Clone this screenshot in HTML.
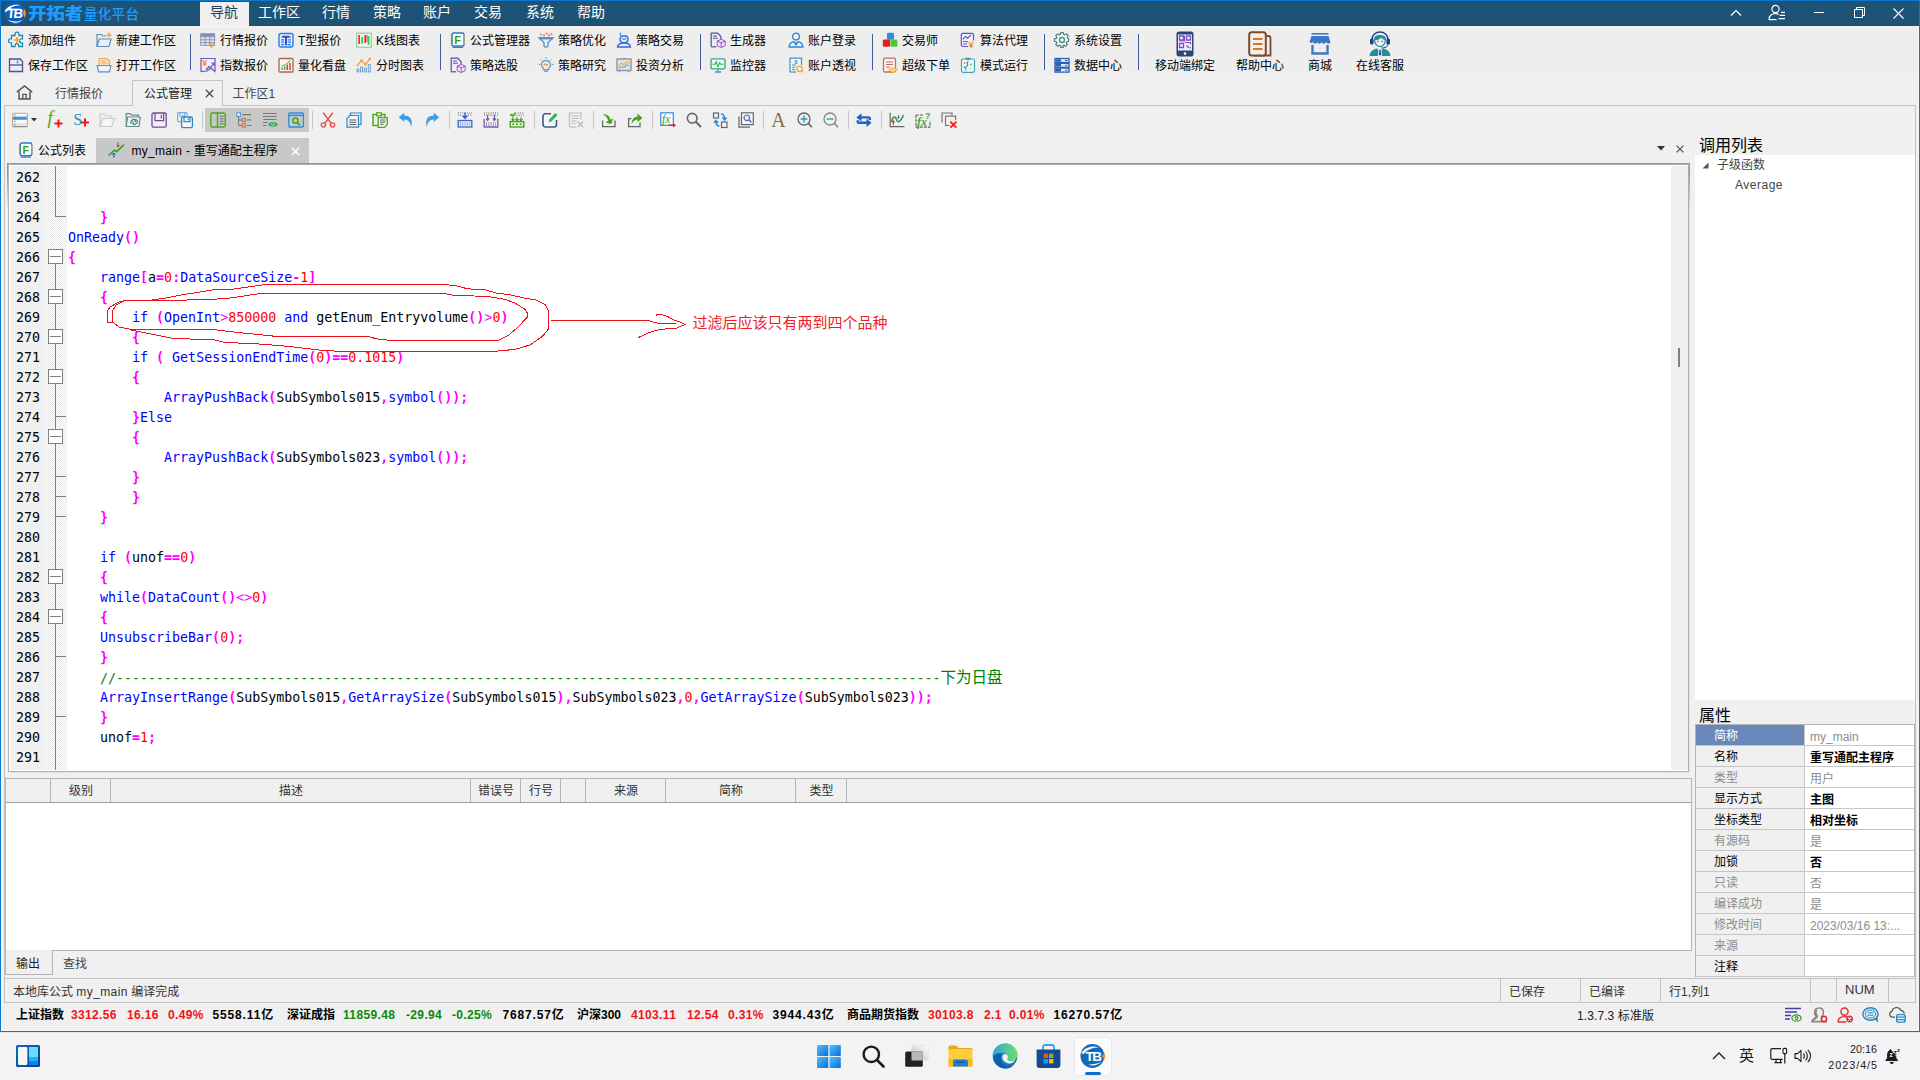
<!DOCTYPE html>
<html lang="zh-CN"><head><meta charset="utf-8"><title>开拓者量化平台</title>
<style>
*{box-sizing:border-box;margin:0;padding:0}
html,body{width:1920px;height:1080px;overflow:hidden;background:#f0f0f0}
body{font-family:"Liberation Sans","Noto Sans CJK SC",sans-serif;font-size:12px;color:#000}
#app{position:absolute;left:0;top:0;width:1920px;height:1080px;overflow:hidden;background:#f0f0f0}
.abs{position:absolute}
.t{position:absolute;white-space:nowrap;line-height:1}
svg{position:absolute;overflow:visible}
/* title bar */
#title{position:absolute;left:0;top:0;width:1920px;height:26px;background:#1f5376;border-top:1px solid #0b78d0;border-bottom:1px solid #184c71}
#lborder{position:absolute;left:0;top:0;width:1px;height:1032px;background:#0b78d0}
#rborder{position:absolute;left:1919px;top:0;width:1px;height:1032px;background:#0b78d0}
#bborder{position:absolute;left:0;top:1031px;width:1920px;height:1px;background:#0b78d0}
.menu{position:absolute;top:4px;font-size:14px;color:#fff;line-height:16px;white-space:nowrap}
#mactive{position:absolute;left:200px;top:2px;width:49px;height:24px;background:#f0f0f0}
/* ribbon */
#ribbon{position:absolute;left:1px;top:26px;width:1918px;height:50px;background:#eeeeee;border-top:1px solid #f8f5f3}
.rl{position:absolute;font-size:12px;line-height:14px;white-space:nowrap;color:#000}
.rsep{position:absolute;top:34px;width:1px;height:36px;background:#3b5d95}
/* workspace tabs */
.wtab{position:absolute;font-size:12px;line-height:14px;white-space:nowrap;color:#444;top:86.6px}
.tbsep{position:absolute;top:111px;width:1px;height:18px;background:#c6c6c6}
/* editor */
#ed{position:absolute;left:8px;top:164px;width:1681px;height:608px;background:#fff;border:1px solid #aeb0b8}
#ednum{position:absolute;left:10px;top:166px;width:33px;height:604px;background:#f0f0f0}
#edfold{position:absolute;left:43px;top:166px;width:24px;height:604px;background:#fdfdfd;background-image:linear-gradient(45deg,#e9e9e9 25%,transparent 25%,transparent 75%,#e9e9e9 75%),linear-gradient(45deg,#e9e9e9 25%,transparent 25%,transparent 75%,#e9e9e9 75%);background-size:2px 2px;background-position:0 0,1px 1px}
#edsb{position:absolute;left:1671px;top:166px;width:17px;height:604px;background:#f0f0f0}
.ln,.cl{position:absolute;white-space:pre;font-family:"DejaVu Sans Mono","Liberation Mono",monospace;font-size:13.3px;line-height:20px;height:20px;letter-spacing:0}
.ln{left:16px;color:#000}
.cl{left:68px;color:#000}
.k{color:#0000ff}.p{color:#ff00ff;font-weight:bold}.q{color:#ff00ff}.n{color:#ff0000}.c{color:#008000}
.fb{position:absolute;left:48px;width:15px;height:15px;border:1px solid #808080;background:#fff}
.fb:after{content:"";position:absolute;left:1px;top:6px;width:11px;height:1px;background:#808080}
.ft{position:absolute;left:56px;width:10px;height:1px;background:#808080}
/* right panel */
.ph{position:absolute;font-size:16px;line-height:18px;color:#000;white-space:nowrap}
#tree{position:absolute;left:1695px;top:155px;width:220px;height:545px;background:#fff}
#pg{position:absolute;left:1695px;top:724px;width:220px;height:253px;background:#f0f0f0;border:1px solid #b4b4b4}
.pr{position:absolute;left:0;width:218px;height:21px;border-bottom:1px solid #c6c6c6}
.pr .l{position:absolute;left:18px;top:3.8px;font-size:12px;line-height:14px;white-space:nowrap}
.pr .v{position:absolute;left:108px;top:0;width:110px;height:20px;background:#fff;border-left:1px solid #c6c6c6}
.pr .v span{position:absolute;left:5px;top:4.5px;font-size:12px;line-height:14px;white-space:nowrap}
.pr.d .l,.pr.d .v span{color:#8d8d8d}
.pr.b .v span{font-weight:bold}
/* output */
#outp{position:absolute;left:5px;top:778px;width:1687px;height:173px;background:#fff;border:1px solid #b4b4b4}
#outh{position:absolute;left:6px;top:779px;width:1685px;height:24px;background:#f0f0f0;border-bottom:1px solid #a0a0a0}
.oh{position:absolute;top:779px;height:23px;border-right:1px solid #b4b4b4;font-size:12px;line-height:24px;text-align:center;color:#333;padding-left:2px}
/* status */
#stat{position:absolute;left:4px;top:978px;width:1912px;height:25px;border-top:1px solid #c3c3c3;border-bottom:1px solid #c3c3c3;border-left:1px solid #c3c3c3;background:#f0f0f0}
.sd{position:absolute;top:979px;width:1px;height:23px;background:#c3c3c3}
.st{position:absolute;top:984.6px;font-size:12px;line-height:14px;white-space:nowrap;color:#333}
.tk{position:absolute;top:1008px;font-size:12px;line-height:14px;white-space:nowrap;font-weight:bold;color:#000}
.r{color:#f01414}.g{color:#0a8a0a}
#task{position:absolute;left:0;top:1032px;width:1920px;height:48px;background:#f3f3f3}

#inl{position:absolute;left:1px;top:27px;width:1px;height:1004px;background:#faf6f2}
#inr{position:absolute;left:1918px;top:27px;width:1px;height:1004px;background:#faf6f2}
#inb{position:absolute;left:1px;top:1030px;width:1918px;height:1px;background:#faf6f2}
#tsh{position:absolute;left:0;top:1032px;width:1920px;height:1px;background:#e6e2e0}

</style></head>
<body>
<div id="app">
<div id="title"></div>
<div id="mactive"></div>
<!-- logo -->
<svg style="left:3px;top:2px" width="24" height="23" viewBox="0 0 24 23">
  <ellipse cx="11.9" cy="10.9" rx="10.9" ry="10.8" fill="#0b5fb9"/>
  <path d="M1.6 9.2 C4.5 4 11 1.6 17.5 3.2 C11 3.4 6.5 5.4 3.4 9.8Z" fill="#fff"/>
  <path d="M1.3 10.5 C2.6 8.6 5 6.4 8 5.6 L8.6 7.2 C6 7.6 3.6 9 1.3 10.5Z" fill="#fff"/>
  <path d="M20.6 6.6 C23.6 9.4 23.6 13.4 20.9 16.2 C21.6 14 20.6 12.2 19.4 11.2 C20.8 10 21.2 8.4 20.6 6.6Z" fill="#f5921e"/>
  <path d="M4.4 17.6 C8 21.6 15.5 22 20 17.4 C15.5 20.2 9 20 4.4 17.6Z" fill="#fff"/>
  <path d="M6.2 19.8 C10 22.6 15.4 22.4 19 19.4 C15 21.4 10 21.4 6.2 19.8Z" fill="#2f86d8"/>
  <text x="5.2" y="16.4" font-family="Liberation Sans,sans-serif" font-weight="bold" font-size="13.5" fill="#fff" letter-spacing="-1.6" transform="skewX(-6)">TB</text>
</svg>
<div class="t" style="left:28.4px;top:4.9px;font-size:16px;line-height:18px;font-weight:900;color:#1d9dff;letter-spacing:0;transform:scaleX(1.15);transform-origin:left top;font-family:'Liberation Sans','Noto Sans CJK SC',sans-serif">开拓者</div>
<div class="t" style="left:84px;top:7px;font-size:13.5px;line-height:16px;font-weight:500;color:#1d9dff;letter-spacing:0.3px">量化平台</div>
<div class="menu" style="left:210px;color:#1f3a5f">导航</div>
<div class="menu" style="left:258px">工作区</div>
<div class="menu" style="left:322px">行情</div>
<div class="menu" style="left:373px">策略</div>
<div class="menu" style="left:423px">账户</div>
<div class="menu" style="left:474px">交易</div>
<div class="menu" style="left:526px">系统</div>
<div class="menu" style="left:577px">帮助</div>
<!-- window controls -->
<svg style="left:1730px;top:6.5px" width="12" height="12" viewBox="0 0 12 12"><path d="M1 8.5 L6 3.5 L11 8.5" fill="none" stroke="#fff" stroke-width="1.2"/></svg>
<svg style="left:1768px;top:4px" width="18" height="17" viewBox="0 0 18 17"><circle cx="7.5" cy="5" r="3.6" fill="none" stroke="#fff" stroke-width="1.2"/><path d="M1 16 C1 11.5 4 9.6 7.5 9.6 C9 9.6 10 10 10.6 10.4" fill="none" stroke="#fff" stroke-width="1.2"/><path d="M1 15.6 H8.5" stroke="#fff" stroke-width="1.2"/><path d="M13 8.4 H17 M11.5 11.4 H17 M10.5 14.6 H17" stroke="#fff" stroke-width="1.1"/></svg>
<div class="abs" style="left:1814px;top:12px;width:10px;height:1px;background:#fff"></div>
<svg style="left:1853.5px;top:6.5px" width="11" height="11" viewBox="0 0 11 11"><path d="M0.5 2.5 H8.5 V10.5 H0.5Z M2.5 2.5 V0.5 H10.5 V8.5 H8.5" fill="none" stroke="#fff" stroke-width="1"/></svg>
<svg style="left:1892.5px;top:7.5px" width="11" height="11" viewBox="0 0 11 11"><path d="M0.5 0.5 L10.5 10.5 M10.5 0.5 L0.5 10.5" fill="none" stroke="#fff" stroke-width="1.1"/></svg>

<div id="ribbon"></div>
<svg style="left:8px;top:32px" width="16" height="16" viewBox="0 0 16 16"><g transform="translate(1,0)"><path d="M6 2.2 a2 2 0 0 1 4 0 v1.3 h3.5 v3.3 h-1 a2 2 0 0 0 0 4 h1 v3.7 h-3.8 v-1 a1.8 1.8 0 0 0 -3.6 0 v1 H2.5 v-3.6 h-1 a2 2 0 0 1 0-4 h1 V3.5 H6Z" fill="none" stroke="#1c8bb8" stroke-width="1.3"/><path d="M8 5 v6 M5 8 h6" stroke="#ff9a1a" stroke-width="1.7"/></g></svg>
<div class="rl" style="left:28px;top:33.6px">添加组件</div>
<svg style="left:96px;top:32px" width="16" height="16" viewBox="0 0 16 16"><path d="M1 14.5 V2.5 h4.5 l1.2 1.5 H10" fill="none" stroke="#5b8fbf" stroke-width="1.2"/><path d="M1 14.5 L3.3 7 H15 L13 14.5 Z" fill="none" stroke="#5b8fbf" stroke-width="1.2"/><path d="M13 0.5 v5 M10.5 3 h5" stroke="#f4a24a" stroke-width="1.3"/></svg>
<div class="rl" style="left:116px;top:33.6px">新建工作区</div>
<svg style="left:200px;top:32px" width="16" height="16" viewBox="0 0 16 16"><rect x="0.8" y="1.8" width="13.8" height="11.5" fill="#e8ecf3" stroke="#8492b0" stroke-width="1"/><path d="M0.8 4.8 h13.8 M0.8 7.8 h13.8 M0.8 10.6 h13.8 M5.2 1.8 v11.5 M9.8 1.8 v11.5" stroke="#8492b0" stroke-width="1"/><rect x="0.8" y="1.8" width="13.8" height="2.6" fill="#7f8fb5"/><text x="9.6" y="15.5" font-size="8" font-weight="bold" fill="#f59a23" font-family="Liberation Sans,sans-serif">¥</text></svg>
<div class="rl" style="left:220px;top:33.6px">行情报价</div>
<svg style="left:278px;top:32px" width="16" height="16" viewBox="0 0 16 16"><rect x="1" y="1.5" width="14" height="13.5" rx="2" fill="#e4f0ff" stroke="#2c7be5" stroke-width="1.4"/><path d="M3 5 h10 M3 7.8 h3.3 M9.7 7.8 H13 M3 10.2 h3.3 M9.7 10.2 H13 M3 12.6 h3.3 M9.7 12.6 H13" stroke="#2c7be5" stroke-width="1.2"/><path d="M4.5 4.8 h7 M8 4.8 v8.4" stroke="#3f46c9" stroke-width="2"/></svg>
<div class="rl" style="left:298px;top:33.6px">T型报价</div>
<svg style="left:356px;top:32px" width="16" height="16" viewBox="0 0 16 16"><rect x="0.7" y="1.2" width="14.6" height="14" fill="#eef7ee" stroke="#7fc39a" stroke-width="1"/><path d="M3.2 3 v9 M9.2 3 v8" stroke="#f03030" stroke-width="1.7"/><path d="M6.2 5 v6.5 M12.6 4 v9" stroke="#35c94e" stroke-width="1.7"/><path d="M11 3 v7" stroke="#f03030" stroke-width="1"/></svg>
<div class="rl" style="left:376px;top:33.6px">K线图表</div>
<svg style="left:450px;top:32px" width="16" height="16" viewBox="0 0 16 16"><rect x="2" y="1" width="12" height="13" rx="1.5" fill="#fff" stroke="#2e7bc4" stroke-width="1.4"/><path d="M2.5 15.3 h10.5" stroke="#2e7bc4" stroke-width="1.3"/><path d="M0.8 3.5 h1.8 M0.8 6 h1.8 M0.8 8.5 h1.8 M0.8 11 h1.8" stroke="#777" stroke-width="1"/><path d="M14 3 v9" stroke="#f0a030" stroke-width="1"/><text x="4.3" y="12" font-size="11" font-weight="bold" fill="#18a81e" font-family="Liberation Sans,sans-serif">F</text></svg>
<div class="rl" style="left:470px;top:33.6px">公式管理器</div>
<svg style="left:538px;top:32px" width="16" height="16" viewBox="0 0 16 16"><path d="M1 6 H15 L10 10.5 V13.5 a2 1.6 0 0 1 -4 0 V10.5Z" fill="none" stroke="#4f8dc9" stroke-width="1.3"/><path d="M1.5 6.3 h13" stroke="#4f8dc9" stroke-width="2.2"/><circle cx="3" cy="2.5" r="1.1" fill="#f07a78"/><circle cx="6" cy="3.4" r="1.1" fill="#f07a78"/><circle cx="8.6" cy="1.6" r="1.1" fill="#f07a78"/><circle cx="11" cy="3.4" r="1.1" fill="#f07a78"/><circle cx="13.4" cy="2.2" r="1.1" fill="#f07a78"/></svg>
<div class="rl" style="left:558px;top:33.6px">策略优化</div>
<svg style="left:616px;top:32px" width="16" height="16" viewBox="0 0 16 16"><path d="M4.4 2 v2" stroke="#3c62d8" stroke-width="1"/><circle cx="4.4" cy="1.4" r="1" fill="#3cb3e8"/><rect x="4" y="4" width="8" height="6.6" rx="3" fill="#e7efff" stroke="#3c62d8" stroke-width="1.3"/><rect x="5.6" y="6" width="4.8" height="2" rx="1" fill="#45c3ee"/><path d="M1.5 15 C2 11.5 5 11 8 11 C11 11 14 11.5 14.5 15Z" fill="#e7efff" stroke="#3c62d8" stroke-width="1.3"/></svg>
<div class="rl" style="left:636px;top:33.6px">策略交易</div>
<svg style="left:710px;top:32px" width="16" height="16" viewBox="0 0 16 16"><path d="M1.2 14.8 V1.2 h6.5 l3.3 3.3 V7" fill="none" stroke="#4a4fae" stroke-width="1.2"/><path d="M1.2 14.8 h5" stroke="#4a4fae" stroke-width="1.2"/><path d="M3 4 h4 M3 6.2 h5" stroke="#4a4fae" stroke-width="1"/><path d="M11.2 7.3 l4 1.8 v4.6 l-4 1.8 l-4-1.8 V9.1z M7.2 9.1 l4 1.7 l4-1.7 M11.2 10.8 v4.7" fill="#f3e9fb" stroke="#9b55c9" stroke-width="1"/></svg>
<div class="rl" style="left:730px;top:33.6px">生成器</div>
<svg style="left:788px;top:32px" width="16" height="16" viewBox="0 0 16 16"><circle cx="8" cy="4.6" r="3.4" fill="none" stroke="#2f87d6" stroke-width="1.3"/><path d="M1 15 C1.4 11.5 4 10 5.6 9.6 L8 12.5 L10.4 9.6 C12 10 14.6 11.5 15 15Z" fill="#e6f1fc" stroke="#2f87d6" stroke-width="1.3"/><path d="M8 10 v3.4" stroke="#2f87d6" stroke-width="1.4"/></svg>
<div class="rl" style="left:808px;top:33.6px">账户登录</div>
<svg style="left:882px;top:32px" width="16" height="16" viewBox="0 0 16 16"><rect x="5" y="0.8" width="7" height="7" rx="1.2" fill="#2a8fe0"/><rect x="0.8" y="7.4" width="7.2" height="7.4" rx="1.2" fill="#dd2020"/><rect x="8.4" y="7.4" width="7" height="7.4" rx="1.2" fill="#55c540"/></svg>
<div class="rl" style="left:902px;top:33.6px">交易师</div>
<svg style="left:960px;top:32px" width="16" height="16" viewBox="0 0 16 16"><path d="M13.5 8.5 V2.8 a1.5 1.5 0 0 0 -1.5 -1.5 H2.8 a1.5 1.5 0 0 0 -1.5 1.5 V13 a1.5 1.5 0 0 0 1.5 1.5 H8" fill="#f1eefb" stroke="#5d55c0" stroke-width="1.2"/><path d="M3 7 l2.6-2.6 l2 1.8 L11 2.8" fill="none" stroke="#5d55c0" stroke-width="1.1"/><path d="M3 9.6 h5 M3 12 h4" stroke="#5d55c0" stroke-width="1"/><text x="8.6" y="16" font-size="9.5" font-weight="bold" fill="#f5861f" font-family="Liberation Sans,sans-serif">¥</text></svg>
<div class="rl" style="left:980px;top:33.6px">算法代理</div>
<svg style="left:1054px;top:32px" width="16" height="16" viewBox="0 0 16 16"><path d="M6.7 1 h2.6 l0.45 1.9 l1.25 0.55 l1.7-1 l1.85 1.85 l-1 1.7 l0.55 1.25 L15 7.7 v2.6 l-1.9 0.45 l-0.55 1.25 l1 1.7 l-1.85 1.85 l-1.7-1 l-1.25 0.55 L9.3 16.9 H6.7 l-0.45-1.8 l-1.25-0.55 l-1.7 1 L1.45 13.7 l1-1.7 L1.9 10.75 L0 10.3 V7.7 l1.9-0.45 l0.55-1.25 l-1-1.7 L3.3 2.45 l1.7 1 l1.25-0.55z" transform="translate(0.5,-0.4) scale(0.94)" fill="#f4f7f8" stroke="#5b7a88" stroke-width="1.3"/><circle cx="8" cy="8" r="2.5" fill="none" stroke="#39a86b" stroke-width="1.4"/></svg>
<div class="rl" style="left:1074px;top:33.6px">系统设置</div>
<svg style="left:8px;top:57px" width="16" height="16" viewBox="0 0 16 16"><path d="M1.5 2 H12 L14.5 4.5 V14.5 H1.5Z" fill="none" stroke="#4b4f9a" stroke-width="1.3"/><path d="M1.5 8 H14.5" stroke="#4b4f9a" stroke-width="1.3"/><path d="M9.5 3.5 v3" stroke="#29b39a" stroke-width="1.5"/></svg>
<div class="rl" style="left:28px;top:58.6px">保存工作区</div>
<svg style="left:96px;top:57px" width="16" height="16" viewBox="0 0 16 16"><path d="M3 8 V1.5 h8 l2.5 2.5 V8" fill="#fde3c3" stroke="#f2a254" stroke-width="1.1"/><path d="M5 4 h5 M5 6 h7" stroke="#f2a254" stroke-width="1"/><path d="M1.2 8.5 H14.8 L13.5 14.8 H2.5Z" fill="#eef3f8" stroke="#5b8fbf" stroke-width="1.2"/></svg>
<div class="rl" style="left:116px;top:58.6px">打开工作区</div>
<svg style="left:200px;top:57px" width="16" height="16" viewBox="0 0 16 16"><path d="M1 1.5 H15 V14.5 L11 11 L7 14 L1 14.5Z" fill="#f1eefb" stroke="#6a56c2" stroke-width="1.2"/><text x="2.2" y="9.2" font-size="9" font-weight="bold" fill="#f58a1f" font-family="Liberation Sans,sans-serif">¥</text><path d="M6 13 L9 9.5 L10.5 11 L14 6 M11.3 6 H14 V8.7" fill="none" stroke="#6a56c2" stroke-width="1.2"/></svg>
<div class="rl" style="left:220px;top:58.6px">指数报价</div>
<svg style="left:278px;top:57px" width="16" height="16" viewBox="0 0 16 16"><rect x="1" y="1.5" width="14" height="13.5" rx="1" fill="#fbf4f1" stroke="#b0614c" stroke-width="1.3"/><path d="M4 13 v-2.5 M6.6 13 v-4" stroke="#37b44a" stroke-width="1.5"/><path d="M9.3 13 v-5.5 M12 13 v-7" stroke="#e53a33" stroke-width="1.5"/><path d="M3.5 9 C6 8.5 9 7 12.3 3.6" fill="none" stroke="#37b44a" stroke-width="1"/></svg>
<div class="rl" style="left:298px;top:58.6px">量化看盘</div>
<svg style="left:356px;top:57px" width="16" height="16" viewBox="0 0 16 16"><path d="M1 15 v-3 h1.8 v3z M4.5 15 v-5 h2 v5z M8.3 15 v-4 h2 v4z M12.3 15 v-7.5 h2 v7.5z" fill="#e6eff8" stroke="#6fa0cf" stroke-width="1"/><path d="M1 9 L5.5 3.5 L9.5 7.5 L14 1.5" fill="none" stroke="#f5a338" stroke-width="1.3"/><circle cx="5.5" cy="3.5" r="1.2" fill="#f5a338"/><circle cx="9.5" cy="7.5" r="1.2" fill="#f5a338"/><circle cx="14" cy="1.7" r="1.2" fill="#f5a338"/></svg>
<div class="rl" style="left:376px;top:58.6px">分时图表</div>
<svg style="left:450px;top:57px" width="16" height="16" viewBox="0 0 16 16"><path d="M1.2 14.8 V1.2 h6.5 l3.3 3.3 V7" fill="none" stroke="#4a4fae" stroke-width="1.2"/><path d="M1.2 14.8 h5" stroke="#4a4fae" stroke-width="1.2"/><path d="M3 4 h4 M3 6.2 h5" stroke="#4a4fae" stroke-width="1"/><path d="M11.2 7.3 l4 1.8 v4.6 l-4 1.8 l-4-1.8 V9.1z M7.2 9.1 l4 1.7 l4-1.7 M11.2 10.8 v4.7" fill="#f3e9fb" stroke="#9b55c9" stroke-width="1"/></svg>
<div class="rl" style="left:470px;top:58.6px">策略选股</div>
<svg style="left:538px;top:57px" width="16" height="16" viewBox="0 0 16 16"><path d="M5.3 11 C3.5 9.6 3.2 7.8 3.6 6.6 C4.2 4.6 6 3.6 8 3.6 C10 3.6 11.8 4.6 12.4 6.6 C12.8 7.8 12.5 9.6 10.7 11 V12.6 H5.3Z" fill="none" stroke="#5a9cc0" stroke-width="1.1"/><path d="M6 14.2 h4" stroke="#5a9cc0" stroke-width="1.2"/><path d="M8 0.3 v1.6 M2.6 2.4 l1.1 1.1 M13.4 2.4 l-1.1 1.1 M0.6 7.4 h1.6 M13.8 7.4 h1.6" stroke="#5a9cc0" stroke-width="1"/><path d="M5.5 8 l1.8-1 l1.2 1.4 l2-1.6" fill="none" stroke="#f09a3a" stroke-width="1.1"/></svg>
<div class="rl" style="left:558px;top:58.6px">策略研究</div>
<svg style="left:616px;top:57px" width="16" height="16" viewBox="0 0 16 16"><rect x="1" y="2" width="14" height="11.5" fill="#dfe3ea" stroke="#8d94a6" stroke-width="1.4"/><path d="M3 15.3 l1-1.8 M13 15.3 l-1-1.8 M8 0.5 v1.5" stroke="#8d94a6" stroke-width="1.2"/><path d="M2.5 9 L5.5 6 L8 8 L11 4.5 L13.5 6.5" fill="none" stroke="#f3b12e" stroke-width="1.2"/><path d="M2.5 11.5 L5.5 9.5 L8 10.5 L11 8 L13.5 9" fill="none" stroke="#6db3e8" stroke-width="1.2"/></svg>
<div class="rl" style="left:636px;top:58.6px">投资分析</div>
<svg style="left:710px;top:57px" width="16" height="16" viewBox="0 0 16 16"><rect x="1" y="1.8" width="14" height="10" rx="1" fill="#eafaf3" stroke="#3aa38e" stroke-width="1.3"/><path d="M5 15 h6 M8 12 v3" stroke="#3aa38e" stroke-width="1.3"/><path d="M2.5 7.2 h2.5 l1.2-2.6 l1.8 5 l1.6-4 l1 1.6 h3" fill="none" stroke="#30b54a" stroke-width="1.1"/></svg>
<div class="rl" style="left:730px;top:58.6px">监控器</div>
<svg style="left:788px;top:57px" width="16" height="16" viewBox="0 0 16 16"><path d="M2 15 V1.2 H13.5 V8" fill="#eef5fb" stroke="#3f93c9" stroke-width="1.2"/><path d="M2 15 H8" stroke="#3f93c9" stroke-width="1.2"/><path d="M4 8 h4 M4 10.3 h3.3 M4 12.5 h3" stroke="#3f93c9" stroke-width="1"/><text x="6.2" y="6.6" font-size="6" font-weight="bold" fill="#3f93c9" font-family="Liberation Sans,sans-serif">$</text><circle cx="11.6" cy="11.8" r="2.7" fill="none" stroke="#f6a93b" stroke-width="1.3"/><path d="M13.6 13.8 l1.6 1.6" stroke="#f6a93b" stroke-width="1.4"/></svg>
<div class="rl" style="left:808px;top:58.6px">账户透视</div>
<svg style="left:882px;top:57px" width="16" height="16" viewBox="0 0 16 16"><rect x="1.5" y="1.2" width="12" height="13.8" rx="1.5" fill="#fbf1ee" stroke="#c0705a" stroke-width="1.3"/><path d="M4 5 h7 M4 7.5 h7 M4 10 h4" stroke="#c0705a" stroke-width="1"/><path d="M8.2 11.2 h5.6 l1.4 1.6 l-4.2 3 l-4.2-3z" fill="#ffd27a" stroke="#f3a431" stroke-width="0.9"/></svg>
<div class="rl" style="left:902px;top:58.6px">超级下单</div>
<svg style="left:960px;top:57px" width="16" height="16" viewBox="0 0 16 16"><rect x="1.5" y="2" width="13" height="13.3" rx="1.5" fill="#eefaf9" stroke="#39a7b8" stroke-width="1.2"/><rect x="5.5" y="0.6" width="5" height="2.4" fill="#39a7b8"/><path d="M8.6 4.5 C5 5.5 10 8 6.5 9.5 C4.5 10.6 7 12.4 5.4 13.4" fill="none" stroke="#2f7fd1" stroke-width="1.1"/><circle cx="4.6" cy="6" r="0.9" fill="#f07a3a"/><circle cx="11" cy="7.4" r="0.9" fill="#3cc05a"/><circle cx="10.4" cy="11.6" r="0.9" fill="#f0c030"/><circle cx="4.4" cy="10.2" r="0.9" fill="#3cc05a"/></svg>
<div class="rl" style="left:980px;top:58.6px">模式运行</div>
<svg style="left:1054px;top:57px" width="16" height="16" viewBox="0 0 16 16"><rect x="1" y="1.5" width="14" height="4" fill="#e6eefb" stroke="#2d5fb5" stroke-width="1.3"/><rect x="1" y="6.3" width="14" height="4" fill="#e6eefb" stroke="#2d5fb5" stroke-width="1.3"/><rect x="1" y="11.1" width="14" height="4" fill="#e6eefb" stroke="#2d5fb5" stroke-width="1.3"/><path d="M1.5 3.5 h5.5 M1.5 8.3 h5.5 M1.5 13.1 h5.5" stroke="#2d5fb5" stroke-width="2.6"/><path d="M11 3.5 h2.5 M11 8.3 h2.5 M11 13.1 h2.5" stroke="#2d5fb5" stroke-width="1"/></svg>
<div class="rl" style="left:1074px;top:58.6px">数据中心</div>
<div class="rsep" style="left:190px"></div>
<div class="rsep" style="left:440px"></div>
<div class="rsep" style="left:700px"></div>
<div class="rsep" style="left:872px"></div>
<div class="rsep" style="left:1044px"></div>
<div class="rsep" style="left:1138px"></div>
<svg style="left:1176px;top:31px" width="18" height="26" viewBox="0 0 18 26"><rect x="0.5" y="0.5" width="17" height="25" rx="2.5" fill="#2c4578"/><rect x="2" y="3.5" width="14" height="16" fill="#f3eefb"/><path d="M3.5 5 h4 v4 h-4z M10.5 5 h4 v4 h-4z M3.5 12.5 h4 v4 h-4z" fill="none" stroke="#7d4fc0" stroke-width="1.3"/><path d="M8.5 5 v5 h-5 M9 11.5 h5.5 v2 M10 15 h2 v2 M14 16 v1.5" fill="none" stroke="#7d4fc0" stroke-width="1.2"/><circle cx="9" cy="22.6" r="1.3" fill="#fff"/></svg>
<div class="rl" style="left:1155px;top:58.6px">移动端绑定</div>
<svg style="left:1248px;top:31px" width="24" height="26" viewBox="0 0 24 26"><path d="M18 5 h2.5 a2 2 0 0 1 2 2 V24.5 H6" fill="none" stroke="#7b4a2d" stroke-width="1.8"/><rect x="1.2" y="1.2" width="16.6" height="23.4" rx="2.5" fill="#f3efec" stroke="#7b4a2d" stroke-width="2"/><path d="M5 8 h9.5 M5 13 h9.5 M5 18 h9.5" stroke="#d9771a" stroke-width="1.8"/></svg>
<div class="rl" style="left:1236px;top:58.6px">帮助中心</div>
<svg style="left:1309px;top:33px" width="22" height="22" viewBox="0 0 22 22"><path d="M2.5 0.8 h17" stroke="#3f78c4" stroke-width="1.6"/><path d="M2.5 3 h17 l2 6 a2.3 2.3 0 0 1 -4.4 0 a2.3 2.3 0 0 1 -4.4 0 a2.3 2.3 0 0 1 -4.4 0 a2.3 2.3 0 0 1 -4.4 0 a2.3 2.3 0 0 1 -3.4 0z" fill="#3f78c4"/><path d="M3.5 12 v8.5 h15 V12" fill="none" stroke="#3f78c4" stroke-width="2.4"/></svg>
<div class="rl" style="left:1308px;top:58.6px">商城</div>
<svg style="left:1369px;top:31px" width="22" height="25" viewBox="0 0 22 25"><path d="M3 9.5 C3 3.5 7 1 11 1 C15 1 19 3.5 19 9.5" fill="none" stroke="#243f8f" stroke-width="1.6"/><rect x="1" y="7.5" width="3.6" height="6" rx="1.6" fill="#243f8f"/><rect x="17.4" y="7.5" width="3.6" height="6" rx="1.6" fill="#243f8f"/><path d="M5 8.5 C5 5 8 4 11 4 C14 4 17 5 17 8.5 C17 13 14.5 16 11 16 C7.5 16 5 13 5 8.5Z" fill="#1f8f9a"/><path d="M6.3 9 C8.5 9 11 8 12.3 6.4 C13.4 8 15 8.8 15.8 9 C15.6 12.5 13.6 14.8 11 14.8 C8.4 14.8 6.5 12.5 6.3 9Z" fill="#f2f2f2"/><circle cx="8.8" cy="10.4" r="0.8" fill="#1f8f9a"/><circle cx="13.2" cy="10.4" r="0.8" fill="#1f8f9a"/><path d="M19 13 C19 16 16 17 12 17" fill="none" stroke="#243f8f" stroke-width="1"/><path d="M0.5 25 C1 20 5 18 8 17.5 L11 21 L14 17.5 C17 18 21 20 21.5 25Z" fill="#1f8f9a"/><path d="M9.6 17.5 h2.8 l0.6 7.5 h-4z" fill="#f2f2f2"/><path d="M10.5 18.5 h1 l0.5 5 l-1 1.2 l-1-1.2z" fill="#243f8f"/></svg>
<div class="rl" style="left:1356px;top:58.6px">在线客服</div>
<div class="abs" style="left:4px;top:105px;width:1912px;height:1px;background:#c3c3c3"></div>
<div class="abs" style="left:4px;top:105px;width:1px;height:873px;background:#c3c3c3"></div>
<div class="abs" style="left:1915px;top:105px;width:1px;height:873px;background:#c3c3c3"></div>
<div class="abs" style="left:132px;top:80px;width:91px;height:26px;background:#f0f0f0;border:1px solid #c3c3c3;border-bottom:none"></div>
<svg style="left:16px;top:85px" width="17" height="15" viewBox="0 0 17 15"><path d="M0.8 7.2 L8.5 0.9 L16.2 7.2" fill="none" stroke="#555" stroke-width="1.5"/><path d="M3 6.5 V14 H14 V6.5" fill="none" stroke="#555" stroke-width="1.5"/><path d="M6.8 14 V9.3 H10.2 V14" fill="none" stroke="#555" stroke-width="1.3"/></svg>
<div class="wtab" style="left:55px">行情报价</div>
<div class="wtab" style="left:144px;color:#222">公式管理</div>
<svg style="left:205px;top:89px" width="9" height="9" viewBox="0 0 9 9"><path d="M0.8 0.8 L8.2 8.2 M8.2 0.8 L0.8 8.2" stroke="#555" stroke-width="1.5"/></svg>
<div class="wtab" style="left:232.5px">工作区1</div>
<div class="abs" style="left:205px;top:108px;width:104px;height:24px;background:#c8c8c8"></div>
<div class="tbsep" style="left:202px"></div>
<div class="tbsep" style="left:312px"></div>
<div class="tbsep" style="left:449px"></div>
<div class="tbsep" style="left:534px"></div>
<div class="tbsep" style="left:593px"></div>
<div class="tbsep" style="left:652px"></div>
<div class="tbsep" style="left:763px"></div>
<div class="tbsep" style="left:848px"></div>
<div class="tbsep" style="left:881px"></div>
<svg style="left:12px;top:112px" width="16" height="16" viewBox="0 0 16 16"><rect x="0.6" y="1.2" width="14.8" height="13.6" rx="1.2" fill="#fbfbfb" stroke="#a9a9a9" stroke-width="1.1"/><rect x="1.2" y="4.6" width="13.6" height="3.2" fill="#4a90d9"/><rect x="1.2" y="11" width="13.6" height="3.2" fill="#e4e4e4"/><path d="M1 14.6 h14" stroke="#8a8a8a" stroke-width="1"/><path d="M2.4 3 h1 M2.4 6.2 h1 M2.4 9.4 h1 M2.4 12.6 h1" stroke="#444" stroke-width="1"/></svg>
<svg style="left:47px;top:112px" width="16" height="16" viewBox="0 0 16 16"><text x="0.5" y="12.2" font-family="Liberation Serif,serif" font-style="italic" font-size="18.5" fill="#4aa51e">f</text><path d="M11.5 7.6 v8 M7.5 11.6 h8" stroke="#f01818" stroke-width="2"/></svg>
<svg style="left:73px;top:112px" width="16" height="16" viewBox="0 0 16 16"><text x="0.2" y="13" font-family="Liberation Serif,serif" font-size="16.5" fill="#2d8fbe">S</text><path d="M12 6.5 v8 M8 10.5 h8" stroke="#f01818" stroke-width="2"/></svg>
<svg style="left:99px;top:112px" width="16" height="16" viewBox="0 0 16 16"><path d="M1 14.5 V2 h4.5 l1.5 2 H12 V6.5" fill="none" stroke="#c9c9c9" stroke-width="1.2"/><path d="M1 14.5 L3.6 6.5 H15.3 L12.6 14.5 Z" fill="#f6f6f6" stroke="#c9c9c9" stroke-width="1.2"/></svg>
<svg style="left:125px;top:112px" width="16" height="16" viewBox="0 0 16 16"><path d="M1.2 14.5 V1.6 h4 l1.5 1.6 H13.5 V5" fill="none" stroke="#5e8f8d" stroke-width="1.2"/><path d="M1.2 14.5 L2.6 5 H15.2 L14 14.5 Z" fill="#eef5f4" stroke="#5e8f8d" stroke-width="1.2"/><path d="M6.2 11.6 a1.7 1.7 0 0 1 0-2.4 l1.4-1.4 a1.7 1.7 0 0 1 2.4 2.4 M9.6 8.3 a1.7 1.7 0 0 1 2.4 0 a1.7 1.7 0 0 1 0 2.4 l-1.4 1.4 a1.7 1.7 0 0 1 -2.4 -2.4" fill="none" stroke="#3b7a77" stroke-width="1.2"/></svg>
<svg style="left:151px;top:112px" width="16" height="16" viewBox="0 0 16 16"><rect x="1" y="1" width="14.2" height="14.2" rx="1.6" fill="none" stroke="#6f4a96" stroke-width="1.3"/><path d="M4 1 V8.6 H12.6 V1" fill="none" stroke="#6f4a96" stroke-width="1.2"/><path d="M10.3 3 v3.4" stroke="#6f4a96" stroke-width="1.2"/></svg>
<svg style="left:177px;top:112px" width="16" height="16" viewBox="0 0 16 16"><path d="M4 9.6 H1.6 a1 1 0 0 1 -1 -1 V1.6 a1 1 0 0 1 1 -1 H9 a1 1 0 0 1 1 1 V4.6" fill="none" stroke="#6fb0e0" stroke-width="1.2"/><path d="M2.8 0.8 V4 H7.6 V0.8" fill="none" stroke="#6fb0e0" stroke-width="1.1"/><rect x="4.6" y="5" width="10.8" height="10.6" rx="1.4" fill="#f2f8fd" stroke="#2d87c8" stroke-width="1.3"/><path d="M7 5 V9.6 H13 V5" fill="none" stroke="#2d87c8" stroke-width="1.2"/><path d="M11.2 6.4 v1.8" stroke="#2d87c8" stroke-width="1.1"/></svg>
<svg style="left:210px;top:112px" width="16" height="16" viewBox="0 0 16 16"><rect x="0.8" y="1" width="14.4" height="14" rx="1.5" fill="none" stroke="#4aa61a" stroke-width="1.4"/><path d="M7.5 1 v14" stroke="#4aa61a" stroke-width="1.4"/><path d="M10 4.3 h3.5 M10 6.8 h3.5 M10 9.3 h3.5 M10 11.8 h3.5" stroke="#666" stroke-width="1"/></svg>
<svg style="left:236px;top:112px" width="16" height="16" viewBox="0 0 16 16"><rect x="0.8" y="0.8" width="3.6" height="3.6" fill="#eaf3fc" stroke="#4a90d9" stroke-width="1"/><path d="M2.6 4.4 V13.5 H6 M2.6 8 H6" fill="none" stroke="#777" stroke-width="1"/><rect x="6.2" y="6.3" width="3.2" height="3.2" fill="none" stroke="#e0603a" stroke-width="1"/><rect x="6.2" y="11.8" width="3.2" height="3.2" fill="none" stroke="#e0603a" stroke-width="1"/><path d="M6.5 2.6 H15 M11 8 H15.5 M11 13.5 H15.5" stroke="#777" stroke-width="1.1"/></svg>
<svg style="left:262px;top:112px" width="16" height="16" viewBox="0 0 16 16"><path d="M1 1.5 H14.5 M1 4.5 H14.5 M1 7.5 H14.5 M1 10.5 H5.5 M1 13.5 H4.5" stroke="#777" stroke-width="1.1"/><path d="M6 12.2 C8 8.8 14 8.8 16 12.2 C14 15.6 8 15.6 6 12.2Z" fill="#3aa35a"/><circle cx="11" cy="12.2" r="1.8" fill="#c8c8c8"/><circle cx="11" cy="12.2" r="0.9" fill="#3aa35a"/></svg>
<svg style="left:288px;top:112px" width="16" height="16" viewBox="0 0 16 16"><rect x="0.8" y="1" width="14.6" height="14" rx="1" fill="none" stroke="#2a8de0" stroke-width="1.3"/><path d="M0.8 3.4 h14.6" stroke="#2a8de0" stroke-width="1.4"/><circle cx="7.4" cy="8.6" r="2.6" fill="none" stroke="#46a51c" stroke-width="1.5"/><path d="M9.3 10.5 l2.8 2.8" stroke="#46a51c" stroke-width="1.7"/></svg>
<svg style="left:320px;top:112px" width="16" height="16" viewBox="0 0 16 16"><path d="M3.2 0.8 L11.2 11.4 M12.8 0.8 L4.8 11.4" stroke="#e5504a" stroke-width="1.5" fill="none"/><circle cx="3.4" cy="13" r="2.1" fill="none" stroke="#e5504a" stroke-width="1.4"/><circle cx="12.6" cy="13" r="2.1" fill="none" stroke="#e5504a" stroke-width="1.4"/></svg>
<svg style="left:346px;top:112px" width="16" height="16" viewBox="0 0 16 16"><path d="M4.5 3.5 V1 H15 V12.5 H12.5" fill="none" stroke="#2d87c8" stroke-width="1.2"/><path d="M1 6.5 L4 3.5 H12.5 V15.2 H1Z" fill="#f4f9fd" stroke="#2d87c8" stroke-width="1.2"/><path d="M3.3 8 h7 M3.3 10.3 h7 M3.3 12.6 h7" stroke="#555" stroke-width="1"/></svg>
<svg style="left:372px;top:112px" width="16" height="16" viewBox="0 0 16 16"><path d="M6 13.5 H1 V2.5 H4.5 M9.5 2.5 H13 V5.5" fill="none" stroke="#4aa61a" stroke-width="1.4"/><rect x="4.6" y="0.8" width="4.8" height="3" fill="none" stroke="#4aa61a" stroke-width="1.2"/><path d="M6.2 5.6 H15.2 V12.5 L12.5 15.4 H6.2Z" fill="#f6fbf2" stroke="#4aa61a" stroke-width="1.3"/><path d="M8 8 h5.5 M8 10.2 h5.5 M8 12.4 h3.5" stroke="#555" stroke-width="1"/></svg>
<svg style="left:398px;top:112px" width="16" height="16" viewBox="0 0 16 16"><path d="M0.8 5.2 L6.2 0.8 V3.4 C11.5 3.4 15.4 7 13.2 15 C12.6 10.6 10.4 7.6 6.2 7.6 V10Z" fill="#3f9de6"/></svg>
<svg style="left:424px;top:112px" width="16" height="16" viewBox="0 0 16 16"><path d="M15.2 5.2 L9.8 0.8 V3.4 C4.5 3.4 0.6 7 2.8 15 C3.4 10.6 5.6 7.6 9.8 7.6 V10Z" fill="#3f9de6"/></svg>
<svg style="left:457px;top:112px" width="16" height="16" viewBox="0 0 16 16"><path d="M1 1 h14 M1 3.2 h4 M11 3.2 h4" stroke="#666" stroke-width="1" stroke-dasharray="1 1.2"/><path d="M8 0.5 v5 M5.6 3.6 L8 6.3 L10.4 3.6" fill="none" stroke="#3b63c9" stroke-width="1.5"/><rect x="1.2" y="8.5" width="13.6" height="6.5" fill="none" stroke="#3b63c9" stroke-width="1.3"/><path d="M3 10.8 h10 M3 12.8 h10" stroke="#3b63c9" stroke-width="1" stroke-dasharray="1 1.3"/></svg>
<svg style="left:483px;top:112px" width="16" height="16" viewBox="0 0 16 16"><path d="M1 1 h14 M1 3 h14" stroke="#666" stroke-width="1" stroke-dasharray="1 1.2"/><path d="M4.6 3 v5 M3 6.3 L4.6 8.4 L6.2 6.3 M11.4 3 v5 M9.8 6.3 L11.4 8.4 L13 6.3" fill="none" stroke="#7e57b5" stroke-width="1.2"/><path d="M1.2 7 V15 H14.8 V7" fill="none" stroke="#7e57b5" stroke-width="1.3"/><path d="M3 11 h10 M3 13 h10" stroke="#555" stroke-width="1" stroke-dasharray="1 1.3"/></svg>
<svg style="left:509px;top:112px" width="16" height="16" viewBox="0 0 16 16"><path d="M9 1 h6 M1 3.2 h14" stroke="#666" stroke-width="1" stroke-dasharray="1 1.2"/><path d="M1.5 2 l2 2 l3.5-3.6" fill="none" stroke="#46a51c" stroke-width="1.5"/><path d="M4 5 v3.5 M8 5 v3.5 M12 5 v3.5 M2.6 7 L4 9 L5.4 7 M6.6 7 L8 9 L9.4 7 M10.6 7 L12 9 L13.4 7" fill="none" stroke="#46a51c" stroke-width="1.1"/><rect x="1.2" y="9.6" width="13.6" height="5.4" fill="none" stroke="#46a51c" stroke-width="1.4"/><path d="M3.2 12.3 h2 M7 12.3 h2 M10.8 12.3 h2" stroke="#46a51c" stroke-width="1.6"/></svg>
<svg style="left:542px;top:112px" width="16" height="16" viewBox="0 0 16 16"><path d="M9 1.8 H3.5 a2.5 2.5 0 0 0 -2.5 2.5 V12.5 a2.5 2.5 0 0 0 2.5 2.5 H12 a2.5 2.5 0 0 0 2.5 -2.5 V8" fill="#f5f7fa" stroke="#3d5a80" stroke-width="1.6"/><path d="M6.5 10.2 L7.3 7.6 L13.2 1 L15.5 3 L9.4 9.4Z" fill="#35b54a"/></svg>
<svg style="left:568px;top:112px" width="16" height="16" viewBox="0 0 16 16"><path d="M1.5 15 V1 H13 V8" fill="none" stroke="#bdbdbd" stroke-width="1.2"/><path d="M1.5 15 H8" stroke="#bdbdbd" stroke-width="1.2"/><path d="M3.5 4 h7.5 M3.5 6.5 h7.5 M3.5 9 h5 M3.5 11.5 h4" stroke="#bdbdbd" stroke-width="1"/><path d="M9.6 9.6 l5.6 5.6 M15.2 9.6 l-5.6 5.6" stroke="#bdbdbd" stroke-width="1.4"/></svg>
<svg style="left:601px;top:112px" width="16" height="16" viewBox="0 0 16 16"><path d="M1.6 8.5 V14.6 H14 V8.5" fill="none" stroke="#666" stroke-width="1.3"/><path d="M1.5 2.2 C6 1.8 9 4 9.6 8 L12.2 6.2 L10.2 12.2 L4.6 10.4 L7.2 8.8 C6.6 5.6 4.5 3.4 1.5 2.2Z" fill="#46a51c"/></svg>
<svg style="left:627px;top:112px" width="16" height="16" viewBox="0 0 16 16"><path d="M4.5 6.6 H1.6 V14.6 H13 V10.5" fill="none" stroke="#666" stroke-width="1.3"/><path d="M4.6 12 C4.6 7.5 7 5 10.5 4.6 V1.6 L15.4 6 L10.5 10.2 V7.4 C8 7.6 6 9 4.6 12Z" fill="#46a51c"/></svg>
<svg style="left:660px;top:112px" width="16" height="16" viewBox="0 0 16 16"><rect x="0.8" y="0.8" width="12.5" height="12.5" fill="#fff" stroke="#2a8de0" stroke-width="1.2"/><text x="2" y="11" font-family="Liberation Serif,serif" font-style="italic" font-size="11.5" fill="#3b9a1e">fx</text><path d="M8.5 13.2 H14" stroke="#f01818" stroke-width="1.3"/><path d="M13 11 L16 13.2 L13 15.4Z" fill="#f01818"/></svg>
<svg style="left:686px;top:112px" width="16" height="16" viewBox="0 0 16 16"><circle cx="6.2" cy="6.2" r="4.8" fill="none" stroke="#666" stroke-width="1.6"/><path d="M9.8 9.8 L15 15" stroke="#666" stroke-width="2"/></svg>
<svg style="left:712px;top:112px" width="16" height="16" viewBox="0 0 16 16"><rect x="1.5" y="1" width="5" height="5" fill="none" stroke="#666" stroke-width="1.2"/><rect x="9.5" y="10" width="5.5" height="5.5" fill="none" stroke="#666" stroke-width="1.2"/><path d="M9 2 C12 2 12.5 4 12.5 7 M10.4 5.6 L12.5 8 L14.6 5.6" fill="none" stroke="#2a8de0" stroke-width="1.5"/><path d="M7.5 14 C4.5 14 4 12 4 9.5 M1.9 10.8 L4 8.4 L6.1 10.8" fill="none" stroke="#2a8de0" stroke-width="1.5"/></svg>
<svg style="left:738px;top:112px" width="16" height="16" viewBox="0 0 16 16"><path d="M1 4.5 V15.2 H12 " fill="none" stroke="#666" stroke-width="1.2"/><rect x="3.5" y="0.8" width="11.8" height="11.8" fill="#fafafa" stroke="#666" stroke-width="1.2"/><circle cx="8.8" cy="5.8" r="2.8" fill="#e9ecfb" stroke="#5566cc" stroke-width="1.2"/><path d="M10.8 7.8 l2.6 2.6" stroke="#5566cc" stroke-width="1.4"/></svg>
<svg style="left:771px;top:112px" width="16" height="16" viewBox="0 0 16 16"><text x="0.2" y="15" font-family="Liberation Serif,serif" font-size="20" fill="#8a6a3a">A</text></svg>
<svg style="left:797px;top:112px" width="16" height="16" viewBox="0 0 16 16"><circle cx="7" cy="7" r="6" fill="none" stroke="#666" stroke-width="1.3"/><path d="M11.4 11.4 L15 15.2" stroke="#666" stroke-width="1.6"/><path d="M7 3.6 v6.8 M3.6 7 h6.8" stroke="#2a9db0" stroke-width="1.4"/></svg>
<svg style="left:823px;top:112px" width="16" height="16" viewBox="0 0 16 16"><circle cx="7" cy="7" r="6" fill="none" stroke="#888" stroke-width="1.3"/><path d="M11.4 11.4 L15 15.2" stroke="#888" stroke-width="1.6"/><path d="M3.6 7 h6.8" stroke="#2a9db0" stroke-width="1.4"/></svg>
<svg style="left:856px;top:112px" width="16" height="16" viewBox="0 0 16 16"><g transform="translate(16,0) scale(-1,1)"><path d="M1 8 V6.8 a2.5 2.5 0 0 1 2.5 -2.5 H10.5 V1.2 L15.6 5.4 L10.5 9.4 V6.6 H3.5 V8Z" fill="#2463b8"/><path d="M15.5 8.2 V9.4 a2.5 2.5 0 0 1 -2.5 2.5 H5.5 V15 L0.4 10.8 L5.5 6.8 V9.6 H13 V8.2Z" fill="#2463b8"/></g></svg>
<svg style="left:889px;top:112px" width="16" height="16" viewBox="0 0 16 16"><path d="M1.2 0.8 V14.6 H15.5" fill="none" stroke="#666" stroke-width="1.2"/><path d="M2.5 10 C4 4 6 3.5 7.5 7.5 C9 11.5 11.5 10 14.5 3" fill="none" stroke="#2e9a3a" stroke-width="1.5"/><path d="M4.4 13 v-4 M3.2 10.4 L4.4 8.8 L5.6 10.4" fill="none" stroke="#f03030" stroke-width="1.1"/><path d="M9.4 3 v3 M8.4 5 L9.4 6.4 L10.4 5" fill="none" stroke="#3b63c9" stroke-width="1"/></svg>
<svg style="left:915px;top:112px" width="16" height="16" viewBox="0 0 16 16"><path d="M1 3 V15.2 H15 V9" fill="none" stroke="#666" stroke-width="1.2" stroke-dasharray="3 1"/><path d="M1 3 H8" stroke="#666" stroke-width="1.2" stroke-dasharray="3 1"/><text x="2" y="13.6" font-family="Liberation Serif,serif" font-style="italic" font-weight="bold" font-size="12" fill="#4aa51e">fx</text><text x="10" y="7.4" font-family="Liberation Sans,sans-serif" font-weight="bold" font-size="9" fill="#4aa51e">?</text></svg>
<svg style="left:941px;top:112px" width="16" height="16" viewBox="0 0 16 16"><path d="M1 10.5 V1 H11 V3" fill="none" stroke="#777" stroke-width="1.2"/><path d="M4.5 4.2 H14.6 V8 M4.5 4.2 V13.5 H8.5" fill="none" stroke="#777" stroke-width="1.2"/><path d="M9.4 9.6 l6 6 M15.4 9.6 l-6 6" stroke="#ee1c1c" stroke-width="1.7"/></svg>
<svg style="left:31px;top:118px" width="6" height="4" viewBox="0 0 6 4"><path d="M0 0 H6 L3 3.5Z" fill="#333"/></svg>
<div class="abs" style="left:96px;top:138px;width:213px;height:26px;background:#c8c8c8"></div>
<svg style="left:18px;top:142px" width="16" height="16" viewBox="0 0 16 16"><rect x="2.2" y="1" width="11.6" height="12.6" rx="1.5" fill="#fff" stroke="#2e7bc4" stroke-width="1.4"/><path d="M2.5 15 h10.5" stroke="#2e7bc4" stroke-width="1.3"/><path d="M1 3.5 h1.6 M1 6 h1.6 M1 8.5 h1.6 M1 11 h1.6" stroke="#777" stroke-width="1"/><path d="M13.8 3 v8.5" stroke="#f0a030" stroke-width="1"/><text x="4.6" y="11.6" font-size="10.5" font-weight="bold" fill="#18a81e" font-family="Liberation Sans,sans-serif">F</text></svg>
<div class="t" style="left:38px;top:144.2px;font-size:12px;line-height:14px">公式列表</div>
<svg style="left:108px;top:142px" width="17" height="16" viewBox="0 0 17 16"><path d="M0.5 13.5 L6.5 8.2 L8.5 9.6 L16 2.6" fill="none" stroke="#22aa22" stroke-width="1.6"/><path d="M10 0.5 v4.5 M8.8 3.4 L10 5 L11.2 3.4" fill="none" stroke="#ee2020" stroke-width="1"/><path d="M5.8 15.5 v-4.5 M4.6 12.6 L5.8 11 L7 12.6" fill="none" stroke="#2030d0" stroke-width="1"/></svg>
<div class="t" style="left:131.5px;top:144.2px;font-size:12px;line-height:14px"><span style="letter-spacing:0.3px">my_main - </span>重写通配主程序</div>
<svg style="left:291px;top:147px" width="9" height="9" viewBox="0 0 9 9"><path d="M0.8 0.8 L8.2 8.2 M8.2 0.8 L0.8 8.2" stroke="#fff" stroke-width="1.5"/></svg>
<svg style="left:1657px;top:146px" width="8" height="5" viewBox="0 0 8 5"><path d="M0 0 H8 L4 4.5Z" fill="#333"/></svg>
<svg style="left:1676px;top:145px" width="8" height="8" viewBox="0 0 8 8"><path d="M0.6 0.6 L7.4 7.4 M7.4 0.6 L0.6 7.4" stroke="#555" stroke-width="1.3"/></svg>


<div id="ed"></div><div id="ednum"></div><div id="edfold"></div><div id="edsb"></div>
<div class="abs" style="left:7px;top:163px;width:1683px;height:1px;background:#22c3d6"></div>
<div class="abs" style="left:7px;top:163px;width:1px;height:46px;background:linear-gradient(#22c3d6,#22c3d6 25%,#f0f0f0)"></div>
<div class="abs" style="left:1689px;top:163px;width:1px;height:46px;background:linear-gradient(#22c3d6,#22c3d6 25%,#e4e4e8)"></div>
<div class="abs" style="left:1689px;top:209px;width:1px;height:564px;background:#e4e4e8"></div>
<div class="abs" style="left:9px;top:772px;width:1681px;height:1px;background:#e4e4e8"></div>
<div class="abs" style="left:1678px;top:348px;width:2px;height:19px;background:#808080"></div>
<div class="ln" style="top:168.4px">262</div>
<div class="ln" style="top:188.4px">263</div>
<div class="ln" style="top:208.4px">264</div>
<div class="cl" style="top:208.4px">    <span class="p">}</span></div>
<div class="ln" style="top:228.4px">265</div>
<div class="cl" style="top:228.4px"><span class="k">OnReady</span><span class="p">()</span></div>
<div class="ln" style="top:248.4px">266</div>
<div class="cl" style="top:248.4px"><span class="p">{</span></div>
<div class="ln" style="top:268.4px">267</div>
<div class="cl" style="top:268.4px">    <span class="k">range</span><span class="p">[</span>a<span class="p">=</span><span class="n">0</span><span class="p">:</span><span class="k">DataSourceSize</span><span class="p">-</span><span class="n">1</span><span class="p">]</span></div>
<div class="ln" style="top:288.4px">268</div>
<div class="cl" style="top:288.4px">    <span class="p">{</span></div>
<div class="ln" style="top:308.4px">269</div>
<div class="cl" style="top:308.4px">        <span class="k">if</span> <span class="p">(</span><span class="k">OpenInt</span><span class="q">&gt;</span><span class="n">850000</span> <span class="k">and</span> getEnum_Entryvolume<span class="p">()</span><span class="q">&gt;</span><span class="n">0</span><span class="p">)</span></div>
<div class="ln" style="top:328.4px">270</div>
<div class="cl" style="top:328.4px">        <span class="p">{</span></div>
<div class="ln" style="top:348.4px">271</div>
<div class="cl" style="top:348.4px">        <span class="k">if</span> <span class="p">(</span> <span class="k">GetSessionEndTime</span><span class="p">(</span><span class="n">0</span><span class="p">)==</span><span class="n">0.1015</span><span class="p">)</span></div>
<div class="ln" style="top:368.4px">272</div>
<div class="cl" style="top:368.4px">        <span class="p">{</span></div>
<div class="ln" style="top:388.4px">273</div>
<div class="cl" style="top:388.4px">            <span class="k">ArrayPushBack</span><span class="p">(</span>SubSymbols015<span class="p">,</span><span class="k">symbol</span><span class="p">());</span></div>
<div class="ln" style="top:408.4px">274</div>
<div class="cl" style="top:408.4px">        <span class="p">}</span><span class="k">Else</span></div>
<div class="ln" style="top:428.4px">275</div>
<div class="cl" style="top:428.4px">        <span class="p">{</span></div>
<div class="ln" style="top:448.4px">276</div>
<div class="cl" style="top:448.4px">            <span class="k">ArrayPushBack</span><span class="p">(</span>SubSymbols023<span class="p">,</span><span class="k">symbol</span><span class="p">());</span></div>
<div class="ln" style="top:468.4px">277</div>
<div class="cl" style="top:468.4px">        <span class="p">}</span></div>
<div class="ln" style="top:488.4px">278</div>
<div class="cl" style="top:488.4px">        <span class="p">}</span></div>
<div class="ln" style="top:508.4px">279</div>
<div class="cl" style="top:508.4px">    <span class="p">}</span></div>
<div class="ln" style="top:528.4px">280</div>
<div class="ln" style="top:548.4px">281</div>
<div class="cl" style="top:548.4px">    <span class="k">if</span> <span class="p">(</span>unof<span class="p">==</span><span class="n">0</span><span class="p">)</span></div>
<div class="ln" style="top:568.4px">282</div>
<div class="cl" style="top:568.4px">    <span class="p">{</span></div>
<div class="ln" style="top:588.4px">283</div>
<div class="cl" style="top:588.4px">    <span class="k">while</span><span class="p">(</span><span class="k">DataCount</span><span class="p">()</span><span class="q">&lt;&gt;</span><span class="n">0</span><span class="p">)</span></div>
<div class="ln" style="top:608.4px">284</div>
<div class="cl" style="top:608.4px">    <span class="p">{</span></div>
<div class="ln" style="top:628.4px">285</div>
<div class="cl" style="top:628.4px">    <span class="k">UnsubscribeBar</span><span class="p">(</span><span class="n">0</span><span class="p">);</span></div>
<div class="ln" style="top:648.4px">286</div>
<div class="cl" style="top:648.4px">    <span class="p">}</span></div>
<div class="ln" style="top:668.4px">287</div>
<div class="cl" style="top:668.4px">    <span class="c">//-------------------------------------------------------------------------------------------------------<span style="font-family:'Liberation Sans','Noto Sans CJK SC',sans-serif;font-size:15.5px;letter-spacing:0">下为日盘</span></span></div>
<div class="ln" style="top:688.4px">288</div>
<div class="cl" style="top:688.4px">    <span class="k">ArrayInsertRange</span><span class="p">(</span>SubSymbols015<span class="p">,</span><span class="k">GetArraySize</span><span class="p">(</span>SubSymbols015<span class="p">),</span>SubSymbols023<span class="p">,</span><span class="n">0</span><span class="p">,</span><span class="k">GetArraySize</span><span class="p">(</span>SubSymbols023<span class="p">));</span></div>
<div class="ln" style="top:708.4px">289</div>
<div class="cl" style="top:708.4px">    <span class="p">}</span></div>
<div class="ln" style="top:728.4px">290</div>
<div class="cl" style="top:728.4px">    unof<span class="p">=</span><span class="n">1</span><span class="p">;</span></div>
<div class="ln" style="top:748.4px">291</div>
<div class="abs" style="left:55px;top:166px;width:1px;height:50px;background:#808080"></div>
<div class="ft" style="top:216px;left:55px;width:11px"></div>
<div class="abs" style="left:55px;top:257px;width:1px;height:513px;background:#808080"></div>
<div class="ft" style="top:416px"></div>
<div class="ft" style="top:476px"></div>
<div class="ft" style="top:496px"></div>
<div class="ft" style="top:516px"></div>
<div class="ft" style="top:656px"></div>
<div class="ft" style="top:716px"></div>
<div class="fb" style="top:249px"></div>
<div class="fb" style="top:289px"></div>
<div class="fb" style="top:329px"></div>
<div class="fb" style="top:369px"></div>
<div class="fb" style="top:429px"></div>
<div class="fb" style="top:569px"></div>
<div class="fb" style="top:609px"></div>
<svg style="left:0;top:0" width="1920" height="1080" viewBox="0 0 1920 1080" fill="none" stroke="#f01018" stroke-width="1" shape-rendering="crispEdges">
<polyline points="112.5,322.5 112.5,311 116,305 125,300.6 150,300 187.5,300 225,298.75 244,296 262.5,293.1 442.5,293.1 455,295.6 486,296.25 505,299.4 515,303 525,309.4 527,312.5 527,317.5 517.5,327.5 508.75,335 497.5,340.6 392.5,340.6 376,338.75 367.5,336.25 275,336.25 250,333.75 225,331 212.5,329.4 131,329.4 119,327 114,323 112.5,322.5"/>
<polyline points="112.5,322.5 107.5,322.5 107.5,311 110,307 119,302 127.5,300 152.5,300 166,298 181,295 212.5,290 231,289.4 262.5,285 337.5,284.4 442.5,284.4 455,285.6 467.5,288.75 486,290 496,293 511,295 524,298 536,300 545,304.4 548,310 548.75,328.75 542.5,336.25 530,345 515,349.4 492.5,351.5 337.5,351.25 319,350 287.5,346.25 256,343.75 225,342.5 212.5,339.4 175,338.75 156,335 131,330"/>
<polyline points="551.25,320.5 648.3,320.5 655,322.7 660,323.5 675.8,323.5"/>
<polyline points="656.25,315.6 656.25,314.2 660.8,314.2 667.5,316.4 673.3,319.75 681.7,322.7 685.4,324.75 681.7,325.6 676.7,328 668.3,328.5 660,329.75 655,330.6 648.3,333 638.3,337.5"/>
</svg>
<div class="t" style="left:692.5px;top:314px;font-size:15px;line-height:17px;color:#ee1c24;font-weight:400">过滤后应该只有两到四个品种</div>
<div class="ph" style="left:1699px;top:137px">调用列表</div>
<div id="tree"></div>
<svg style="left:1701.5px;top:162px" width="7" height="7" viewBox="0 0 7 7"><path d="M6.5 0.5 V6.5 H0.5Z" fill="#555"/></svg>
<div class="t" style="left:1717px;top:158px;font-size:12px;line-height:14px;color:#444">子级函数</div>
<div class="t" style="left:1735px;top:178px;font-size:12px;line-height:14px;color:#444;letter-spacing:0.5px">Average</div>
<div class="ph" style="left:1699px;top:706.5px">属性</div>
<div id="pg"><div class="pr" style="top:0px"><div class="abs" style="left:0;top:0;width:108px;height:20px;background:#6a88ba"></div><div class="l" style="color:#fff">简称</div><div class="v"><span style="color:#8d8d8d">my_main</span></div></div><div class="pr b" style="top:21px"><div class="l">名称</div><div class="v"><span>重写通配主程序</span></div></div><div class="pr d" style="top:42px"><div class="l">类型</div><div class="v"><span>用户</span></div></div><div class="pr b" style="top:63px"><div class="l">显示方式</div><div class="v"><span>主图</span></div></div><div class="pr b" style="top:84px"><div class="l">坐标类型</div><div class="v"><span>相对坐标</span></div></div><div class="pr d" style="top:105px"><div class="l">有源码</div><div class="v"><span>是</span></div></div><div class="pr b" style="top:126px"><div class="l">加锁</div><div class="v"><span>否</span></div></div><div class="pr d" style="top:147px"><div class="l">只读</div><div class="v"><span>否</span></div></div><div class="pr d" style="top:168px"><div class="l">编译成功</div><div class="v"><span>是</span></div></div><div class="pr d" style="top:189px"><div class="l">修改时间</div><div class="v"><span>2023/03/16 13:...</span></div></div><div class="pr d" style="top:210px"><div class="l">来源</div><div class="v"><span></span></div></div><div class="pr b" style="top:231px"><div class="l">注释</div><div class="v"><span></span></div></div></div>
<div id="outp"></div><div id="outh"></div>
<div class="oh" style="left:6px;width:45px"></div>
<div class="oh" style="left:50px;width:61px">级别</div>
<div class="oh" style="left:110px;width:361px">描述</div>
<div class="oh" style="left:470px;width:51px">错误号</div>
<div class="oh" style="left:520px;width:41px">行号</div>
<div class="oh" style="left:560px;width:26px"></div>
<div class="oh" style="left:585px;width:81px">来源</div>
<div class="oh" style="left:665px;width:131px">简称</div>
<div class="oh" style="left:795px;width:52px">类型</div>
<div class="abs" style="left:5px;top:950px;width:48px;height:25px;background:#f0f0f0;border:1px solid #b4b4b4;border-top:none"></div>
<div class="t" style="left:16px;top:957px;font-size:12px;line-height:14px;color:#222">输出</div>
<div class="t" style="left:63px;top:957px;font-size:12px;line-height:14px;color:#444">查找</div>
<div id="stat"></div>
<div class="sd" style="left:1500px"></div>
<div class="sd" style="left:1580px"></div>
<div class="sd" style="left:1660px"></div>
<div class="sd" style="left:1810px"></div>
<div class="sd" style="left:1836px"></div>
<div class="sd" style="left:1888px"></div>
<div class="sd" style="left:1915px"></div>
<div class="st" style="left:13px">本地库公式 <span style="letter-spacing:0.4px">my_main</span> 编译完成</div>
<div class="st" style="left:1509px">已保存</div>
<div class="st" style="left:1589px">已编译</div>
<div class="st" style="left:1669px">行1,列1</div>
<div class="st" style="left:1845px;top:983px;font-size:13px">NUM</div>
<div class="tk " style="left:16px">上证指数</div>
<div class="tk r" style="left:71px"><span style="letter-spacing:0.35px">3312.56</span></div>
<div class="tk r" style="left:127px"><span style="letter-spacing:0.35px">16.16</span></div>
<div class="tk r" style="left:168px"><span style="letter-spacing:0.35px">0.49%</span></div>
<div class="tk " style="left:212.5px"><span style="letter-spacing:0.85px">5558.11</span>亿</div>
<div class="tk " style="left:287px">深证成指</div>
<div class="tk g" style="left:343px"><span style="letter-spacing:0.35px">11859.48</span></div>
<div class="tk g" style="left:406px"><span style="letter-spacing:0.35px">-29.94</span></div>
<div class="tk g" style="left:452px"><span style="letter-spacing:0.35px">-0.25%</span></div>
<div class="tk " style="left:502.5px"><span style="letter-spacing:0.85px">7687.57</span>亿</div>
<div class="tk " style="left:577px">沪深300</div>
<div class="tk r" style="left:631px"><span style="letter-spacing:0.35px">4103.11</span></div>
<div class="tk r" style="left:687px"><span style="letter-spacing:0.35px">12.54</span></div>
<div class="tk r" style="left:728px"><span style="letter-spacing:0.35px">0.31%</span></div>
<div class="tk " style="left:772.5px"><span style="letter-spacing:0.85px">3944.43</span>亿</div>
<div class="tk " style="left:847px">商品期货指数</div>
<div class="tk r" style="left:928px"><span style="letter-spacing:0.35px">30103.8</span></div>
<div class="tk r" style="left:984px"><span style="letter-spacing:0.35px">2.1</span></div>
<div class="tk r" style="left:1009px"><span style="letter-spacing:0.35px">0.01%</span></div>
<div class="tk " style="left:1053.5px"><span style="letter-spacing:0.85px">16270.57</span>亿</div>
<div class="t" style="left:1577px;top:1009px;font-size:12px;line-height:14px;color:#222;letter-spacing:0.1px">1.3.7.3 标准版</div>
<svg style="left:1785px;top:1007px" width="17" height="16" viewBox="0 0 17 16"><path d="M0 1.5 H16 M0 5 H12 M0 8.5 H6 M0 12 H5" stroke="#3f3fa8" stroke-width="1.6"/><ellipse cx="11.5" cy="11" rx="4.6" ry="3.2" fill="none" stroke="#3a9a2a" stroke-width="1.3"/><circle cx="11.5" cy="11" r="1.4" fill="none" stroke="#3a9a2a" stroke-width="1.1"/></svg>
<svg style="left:1811px;top:1007px" width="17" height="16" viewBox="0 0 17 16"><path d="M8 1 C11 1 12.4 3 12.4 5.6 C12.4 7.5 11.6 9 10.6 9.8 L10.6 10.8 C12 11 14 12 15 14.6 H1 C2 12 4 11 5.4 10.8 V9.8 C4.4 9 3.6 7.5 3.6 5.6 C3.6 3 5 1 8 1Z" fill="none" stroke="#8a8a8a" stroke-width="1.6"/><path d="M1.5 14.4 C3 11 6 11 6 9 C4.5 7.5 4 4 5.5 2.4" fill="none" stroke="#8a8a8a" stroke-width="2.4"/><circle cx="13" cy="12" r="2.6" fill="#fff" stroke="#ee2a2a" stroke-width="1.6"/></svg>
<svg style="left:1837px;top:1007px" width="17" height="16" viewBox="0 0 17 16"><circle cx="7.5" cy="4.6" r="3.6" fill="none" stroke="#e03030" stroke-width="1.4"/><path d="M1 15 C1.3 11 4 9.6 7.5 9.6 C8.6 9.6 9.4 9.8 10 10 M1 15 H9" fill="none" stroke="#e03030" stroke-width="1.4"/><circle cx="12.6" cy="12" r="3.4" fill="#e03030"/><path d="M11 10.4 l3.2 3.2 M14.2 10.4 l-3.2 3.2" stroke="#fff" stroke-width="1.1"/></svg>
<svg style="left:1862px;top:1007px" width="18" height="16" viewBox="0 0 18 16"><ellipse cx="8.5" cy="7" rx="7.6" ry="6.2" fill="none" stroke="#1f86c2" stroke-width="1.4"/><ellipse cx="8.5" cy="7" rx="5.2" ry="4" fill="none" stroke="#1f86c2" stroke-width="1"/><path d="M5.5 5.8 h6 M5.5 8.2 h6" stroke="#1f86c2" stroke-width="1"/><path d="M12.5 12 L16 15.4 L15.6 10.6Z" fill="#1f86c2"/></svg>
<svg style="left:1889px;top:1007px" width="17" height="16" viewBox="0 0 17 16"><path d="M6 10.2 H3.4 a3 3 0 0 1 -0.4 -5.9 a4.6 4.6 0 0 1 8.8 -0.9 a3.4 3.4 0 0 1 3.4 3.4" fill="none" stroke="#555" stroke-width="1.2"/><rect x="7.6" y="7.6" width="8.6" height="7.6" rx="2" fill="#fff" stroke="#1f86c2" stroke-width="1.3"/><path d="M7.8 10.2 h8.2 M7.8 12.6 h8.2" stroke="#1f86c2" stroke-width="1.2"/></svg>
<div id="inl"></div><div id="inr"></div><div id="inb"></div><div id="lborder"></div><div id="rborder"></div><div id="bborder"></div>
<div id="task"></div><div id="tsh"></div>
<svg style="left:16px;top:1045px" width="24" height="22" viewBox="0 0 24 22"><defs><linearGradient id="wd" x1="0" y1="0" x2="1" y2="1"><stop offset="0" stop-color="#0a6cc8"/><stop offset="1" stop-color="#063f8c"/></linearGradient></defs><rect x="0" y="0" width="24" height="22" rx="1.6" fill="url(#wd)"/><rect x="2" y="2" width="9.4" height="18" rx="1.2" fill="#f7f7f7"/><rect x="13" y="2" width="9" height="10" fill="#6bdcff"/><rect x="13" y="12" width="9" height="4" fill="#1fb0ff"/><rect x="13" y="16" width="9" height="4" fill="#0a84f0"/></svg>
<svg style="left:817px;top:1045px" width="24" height="23" viewBox="0 0 24 23"><defs><linearGradient id="wg" x1="0" y1="0" x2="1" y2="1"><stop offset="0" stop-color="#4cc2ff"/><stop offset="1" stop-color="#0a6cd6"/></linearGradient></defs><rect x="0" y="0" width="11.3" height="11" rx="0.8" fill="url(#wg)"/><rect x="12.5" y="0" width="11.3" height="11" rx="0.8" fill="url(#wg)"/><rect x="0" y="12.1" width="11.3" height="10.9" rx="0.8" fill="url(#wg)"/><rect x="12.5" y="12.1" width="11.3" height="10.9" rx="0.8" fill="url(#wg)"/></svg>
<svg style="left:862px;top:1045px" width="23" height="23" viewBox="0 0 23 23"><circle cx="9.3" cy="9.3" r="7.7" fill="none" stroke="#1b1b1b" stroke-width="2.4"/><path d="M15 15 L21.5 21.5" stroke="#1b1b1b" stroke-width="2.6" stroke-linecap="round"/></svg>
<svg style="left:905px;top:1045px" width="24" height="22" viewBox="0 0 24 22"><defs><linearGradient id="tv" x1="0" y1="1" x2="1" y2="0"><stop offset="0" stop-color="#bdbdbd"/><stop offset="1" stop-color="#ffffff"/></linearGradient></defs><rect x="6.5" y="0.5" width="17" height="15" rx="1.2" fill="url(#tv)" stroke="#e2e2e2" stroke-width="0.6"/><rect x="0.2" y="6.4" width="17.6" height="15.4" rx="1.6" fill="#222"/><path d="M6.5 6.4 H17.8 V15.5 H6.5Z" fill="#b8b8b8"/></svg>
<svg style="left:948px;top:1045px" width="25" height="22" viewBox="0 0 25 22"><path d="M0.5 2 a1.5 1.5 0 0 1 1.5 -1.5 h6 l2.5 2.5 H23 a1.5 1.5 0 0 1 1.5 1.5 V6 H0.5Z" fill="#e8a51c"/><rect x="0.5" y="4" width="24" height="17.5" rx="1.5" fill="#fccf3e"/><path d="M0.5 14 H24.5 V20 a1.5 1.5 0 0 1 -1.5 1.5 H2 a1.5 1.5 0 0 1 -1.5 -1.5Z" fill="#f7ba20"/><path d="M5 21.5 V16.5 a2 2 0 0 1 2 -2 H18 a2 2 0 0 1 2 2 V21.5Z" fill="#1f7fd6"/><rect x="8" y="16.6" width="9" height="1.4" rx="0.7" fill="#0e5aa8"/></svg>
<svg style="left:992px;top:1043px" width="26" height="26" viewBox="0 0 26 26"><defs><linearGradient id="eg1" x1="0" y1="0" x2="1" y2="1"><stop offset="0" stop-color="#35c1f1"/><stop offset="1" stop-color="#0c59a4"/></linearGradient><linearGradient id="eg2" x1="0" y1="0" x2="1" y2="0"><stop offset="0" stop-color="#2aa6de"/><stop offset="1" stop-color="#6ee06a"/></linearGradient></defs><circle cx="13" cy="13" r="12.4" fill="url(#eg1)"/><path d="M1 11 C2.5 4 8 0.6 13.5 0.6 C21 0.6 25.6 6.5 25.4 12 C25.2 16 22 18.2 19 18.2 C16 18.2 15 16.6 15.6 15.4 C16.6 13.6 15.4 9.6 11 9.6 C6 9.6 2 12 1 11Z" fill="url(#eg2)"/><path d="M9.2 13.5 C8.2 18 11.5 23 17 23.6 C19 23.8 21.5 23 22.8 21.8 C20 24.5 16.5 25.6 13 25.4 C6 25 1.6 19.5 1 14 C2.5 11 6.5 9.8 9.6 10.6 C11.8 11.2 9.8 11.8 9.2 13.5Z" fill="#0f5fb0"/><path d="M10.4 14 C10.4 11.8 12.4 10.6 14 11.2 C16.4 12 16.2 14.4 15.6 15.4 C15 16.6 16 18.2 19 18.2 C21 18.2 22.6 17.2 23.4 16.4 C22.6 19 19.6 21 16.6 20.4 C12.6 19.8 10.4 16.8 10.4 14Z" fill="#f3f3f3"/></svg>
<svg style="left:1036px;top:1044px" width="25" height="25" viewBox="0 0 25 25"><path d="M7 6 V3 a2 2 0 0 1 2 -2 H16 a2 2 0 0 1 2 2 V6" fill="none" stroke="#2fa8f2" stroke-width="1.8"/><path d="M0.6 5.6 H24.4 V21 a3 3 0 0 1 -3 3 H3.6 a3 3 0 0 1 -3 -3Z" fill="#164a8e"/><rect x="7.6" y="9.6" width="4.4" height="4.4" fill="#f25022"/><rect x="13" y="9.6" width="4.4" height="4.4" fill="#7fba00"/><rect x="7.6" y="15" width="4.4" height="4.4" fill="#00a4ef"/><rect x="13" y="15" width="4.4" height="4.4" fill="#ffb900"/></svg>
<div class="abs" style="left:1074px;top:1037px;width:38px;height:39px;background:#fbfbfb;border:1px solid #e9e9e9;border-radius:4px"></div>
<svg style="left:1080px;top:1043px" width="26" height="26" viewBox="0 0 26 26"><circle cx="12.4" cy="13" r="11.9" fill="#0f6ab8"/><path d="M1.4 10 C5 4.4 12 2.2 19.5 4.4 C12.5 4.2 7 6.4 3.4 11.2Z" fill="#fbfbfb"/><path d="M7.8 21.6 C12 23.4 18 22.4 21.6 18.6 C17.6 21 12.4 21.8 7.8 21.6Z" fill="#fbfbfb"/><path d="M21.8 13.2 L24.8 9.6 V16.8Z" fill="#f5871a"/><text x="5.4" y="18.2" font-family="Liberation Sans,sans-serif" font-weight="bold" font-size="13.5" fill="#fbfbfb" letter-spacing="-1.4">TB</text></svg>
<div class="abs" style="left:1085px;top:1072px;width:16px;height:3px;border-radius:1.5px;background:#0f6cd0"></div>
<svg style="left:1712px;top:1052px" width="14" height="8" viewBox="0 0 14 8"><path d="M1 7 L7 1 L13 7" fill="none" stroke="#1b1b1b" stroke-width="1.3"/></svg>
<div class="t" style="left:1739px;top:1047px;font-size:15px;line-height:18px;color:#1b1b1b">英</div>
<svg style="left:1770px;top:1047px" width="18" height="18" viewBox="0 0 18 18"><path d="M11 1.6 H2.2 a1.4 1.4 0 0 0 -1.4 1.4 V11 a1.4 1.4 0 0 0 1.4 1.4 H12.6 M4.5 15.6 H12 M6 12.6 v3 M10.6 12.6 v3" fill="none" stroke="#1b1b1b" stroke-width="1.2"/><rect x="13" y="1.4" width="3.6" height="5.2" rx="1" fill="none" stroke="#1b1b1b" stroke-width="1.1"/><path d="M14.8 6.6 V16.4" stroke="#1b1b1b" stroke-width="1.2"/></svg>
<svg style="left:1794px;top:1049px" width="18" height="14" viewBox="0 0 18 14"><path d="M1 4.6 H3.6 L7 1.4 V12.6 L3.6 9.4 H1Z" fill="none" stroke="#1b1b1b" stroke-width="1.1" stroke-linejoin="round"/><path d="M9.4 4.4 C10.6 5.6 10.6 8.4 9.4 9.6 M11.6 2.6 C14 5 14 9 11.6 11.4 M13.8 0.8 C17.4 4.2 17.4 9.8 13.8 13.2" fill="none" stroke="#1b1b1b" stroke-width="1.1"/></svg>
<div class="t" style="right:43px;top:1041.5px;font-size:10.8px;line-height:14px;color:#1b1b1b">20:16</div>
<div class="t" style="right:42px;top:1057.5px;font-size:10.8px;line-height:14px;color:#1b1b1b;letter-spacing:0.95px">2023/4/5</div>
<svg style="left:1885px;top:1048px" width="16" height="17" viewBox="0 0 16 17"><path d="M6 1.6 C3.6 2.4 2.6 4.6 2.6 7 V10 L0.8 12.6 H12.6 L10.8 10 V8" fill="#1b1b1b" stroke="#1b1b1b" stroke-width="1"/><path d="M4.8 14 a2 2 0 0 0 4 0Z" fill="#1b1b1b"/><text x="4.4" y="9.4" font-size="6.5" font-weight="bold" fill="#f3f3f3" font-family="Liberation Sans,sans-serif">z</text><text x="8.6" y="7" font-size="6.5" font-weight="bold" fill="#1b1b1b" font-family="Liberation Sans,sans-serif">z</text><text x="12" y="4.4" font-size="6" font-weight="bold" fill="#1b1b1b" font-family="Liberation Sans,sans-serif">z</text></svg>
</div>
</body></html>
